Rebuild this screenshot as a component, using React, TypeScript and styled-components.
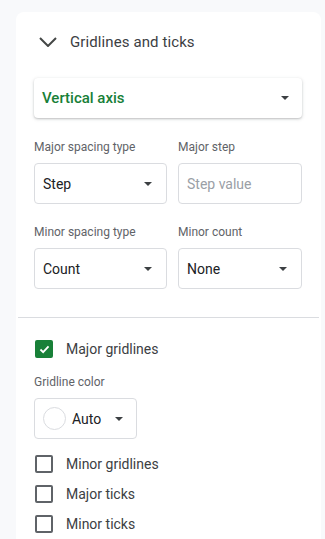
import styled, { createGlobalStyle } from 'styled-components';

const GlobalStyle = createGlobalStyle`
  html, body {
    margin: 0;
    padding: 0;
    background: #f8f9fb;
    font-family: Roboto, 'Liberation Sans', Arial, sans-serif;
  }
`

const Page = styled.div`
  min-height: 539px;
  box-sizing: border-box;
  padding: 12px 4px 0 16px;
  display: flex;
`

const Panel = styled.section`
  flex: 1;
  background: #fff;
  border-radius: 8px 8px 0 0;
  min-height: 527px;
  display: flex;
  flex-direction: column;
`

const Header = styled.div`
  height: 60px;
  display: flex;
  align-items: center;
  gap: 13px;
  padding-left: 23px;
  color: #3c4043;
  font-size: 15px;
  letter-spacing: 0.1px;
`

const Body = styled.div<{ $top?: number }>`
  padding: ${(p) => p.$top ?? 0}px 19px 0 18px;
  display: flex;
  flex-direction: column;
`

const AxisSelect = styled.div`
  height: 40px;
  border-radius: 4px;
  box-shadow: 0 1px 2px rgba(60, 64, 67, 0.25), 0 1px 4px rgba(60, 64, 67, 0.12);
  display: flex;
  align-items: center;
  justify-content: space-between;
  padding: 0 13px 0 8px;
  color: #188038;
  font-size: 15px;
  font-weight: 500;
`

const Caret = styled.span`
  width: 0;
  height: 0;
  border-left: 4px solid transparent;
  border-right: 4px solid transparent;
  border-top: 4px solid #3c4043;
`

const FieldGrid = styled.div<{ $top: number }>`
  display: grid;
  grid-template-columns: 133px 1fr;
  column-gap: 11px;
  margin-top: ${(p) => p.$top}px;
`

const Field = styled.div`
  display: flex;
  flex-direction: column;
  gap: 8px;
`

const Label = styled.div`
  font-size: 12px;
  line-height: 16px;
  color: #5f6368;
`

const Box = styled.div<{ $placeholder?: boolean }>`
  height: 41px;
  box-sizing: border-box;
  border: 1px solid #dadce0;
  border-radius: 4px;
  display: flex;
  align-items: center;
  justify-content: space-between;
  padding: 0 14px 0 8px;
  font-size: 14px;
  color: ${(p) => (p.$placeholder ? '#9aa0a6' : '#202124')};
`

const Divider = styled.hr`
  border: none;
  border-top: 1px solid #dadce0;
  margin: 28px 2px 0 2px;
`

const CheckRow = styled.label`
  height: 30px;
  display: flex;
  align-items: center;
  gap: 13px;
  padding-left: 1px;
  font-size: 14px;
  color: #3c4043;
`

const Check = styled.span<{ $on?: boolean }>`
  width: 18px;
  height: 18px;
  box-sizing: border-box;
  border-radius: 2px;
  border: 2px solid ${(p) => (p.$on ? '#188038' : '#5f6368')};
  background: ${(p) => (p.$on ? '#188038' : '#fff')};
  display: flex;
  align-items: center;
  justify-content: center;
`

const Section = styled.div`
  padding-top: 16px;
  display: flex;
  flex-direction: column;
`

const ColorBlock = styled.div`
  padding: 10px 0;
  display: flex;
  flex-direction: column;
  gap: 8px;
`

const ColorButton = styled.div`
  width: 103px;
  height: 41px;
  box-sizing: border-box;
  border: 1px solid #dadce0;
  border-radius: 4px;
  display: flex;
  align-items: center;
  padding-left: 8px;
  gap: 6px;
  font-size: 14px;
  color: #202124;
`

const Swatch = styled.span`
  width: 23px;
  height: 23px;
  box-sizing: border-box;
  border-radius: 50%;
  border: 1px solid #dadce0;
`

const SmallCaret = styled(Caret)`
  margin-left: 8px;
`

export default function App() {
  return (
    <>
      <GlobalStyle />
      <Page>
        <Panel>
          <Header>
            <svg width='18' height='10' viewBox='0 0 18 10'>
              <polyline points='1,1 9,9 17,1' fill='none' stroke='#444746' strokeWidth='2' />
            </svg>
            Gridlines and ticks
          </Header>
          <Body $top={6}>
            <AxisSelect>
              Vertical axis
              <Caret />
            </AxisSelect>

            <FieldGrid $top={21}>
              <Field>
                <Label>Major spacing type</Label>
                <Box>
                  Step
                  <Caret />
                </Box>
              </Field>
              <Field>
                <Label>Major step</Label>
                <Box $placeholder>Step value</Box>
              </Field>
            </FieldGrid>

            <FieldGrid $top={20}>
              <Field>
                <Label>Minor spacing type</Label>
                <Box>
                  Count
                  <Caret />
                </Box>
              </Field>
              <Field>
                <Label>Minor count</Label>
                <Box>
                  None
                  <Caret />
                </Box>
              </Field>
            </FieldGrid>
          </Body>

          <Divider />

          <Body>
            <Section>
              <CheckRow>
                <Check $on>
                  <svg width='11' height='9' viewBox='0 0 12 10'>
                    <polyline points='1.5,5 4.5,8 10.5,1.5' fill='none' stroke='#fff' strokeWidth='2' />
                  </svg>
                </Check>
                Major gridlines
              </CheckRow>
              <ColorBlock>
                <Label>Gridline color</Label>
                <ColorButton>
                  <Swatch />
                  Auto
                  <SmallCaret />
                </ColorButton>
              </ColorBlock>
              <CheckRow>
                <Check />
                Minor gridlines
              </CheckRow>
              <CheckRow>
                <Check />
                Major ticks
              </CheckRow>
              <CheckRow>
                <Check />
                Minor ticks
              </CheckRow>
            </Section>
          </Body>
        </Panel>
      </Page>
    </>
  )
}
